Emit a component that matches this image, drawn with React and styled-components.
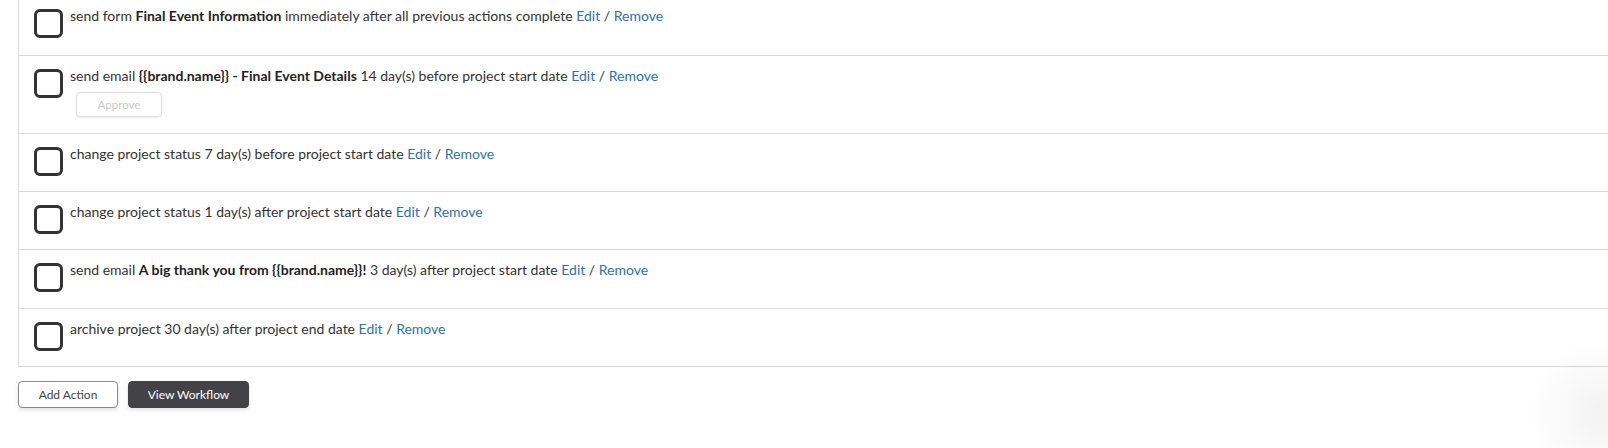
import React from "react";
import styled, { createGlobalStyle } from "styled-components";

const Global = createGlobalStyle`
  html, body { margin: 0; padding: 0; background: #fff; }
  body { font-family: "Lato", "Open Sans", sans-serif; color: #333; overflow: hidden; }
`;

const Page = styled.div`
  padding-left: 18px;
  position: relative;
  height: 448px;
  overflow: hidden;
`;

const List = styled.div`
  margin-top: -4px;
  border-left: 1px solid #dcdcdc;
`;

const Row = styled.div`
  display: flex;
  align-items: flex-start;
  gap: 7px;
  padding: 13px 15px 15px 15px;
  border-bottom: 1px solid #d9d9d9;
  min-height: 29px;
  &:first-child { padding-bottom: 17px; }
  &:nth-child(5) { padding-bottom: 16px; }
`;

const Check = styled.span`
  flex: none;
  width: 29px;
  height: 29px;
  box-sizing: border-box;
  border: 3px solid #333;
  border-radius: 6px;
`;

const Body = styled.div`
  margin-top: -2px;
  display: flex;
  flex-direction: column;
  align-items: flex-start;
`;

const Line = styled.div`
  font-size: 14px;
  line-height: 18px;
  color: #333;
`;

const Strong = styled.b`
  font-weight: 700;
  color: #222;
`;

const Link = styled.a`
  color: #2b72b6;
  text-decoration: none;
  cursor: pointer;
`;

const Approve = styled.button`
  margin: 7px 0 1px 6px;
  width: 86px;
  height: 25px;
  border: 1px solid #dedede;
  border-radius: 4px;
  background: #fff;
  color: #c9c9c9;
  font-family: inherit;
  font-size: 11.5px;
  box-shadow: 0 1px 2px rgba(0, 0, 0, 0.08);
`;

const Buttons = styled.div`
  display: flex;
  gap: 10px;
  margin-top: 14px;
`;

const Btn = styled.button`
  height: 27px;
  width: ${(p) => p.$w}px;
  border-radius: 4px;
  font-family: inherit;
  font-size: 12px;
  border: 1px solid ${(p) => (p.$dark ? "#434247" : "#8a8a8a")};
  background: ${(p) => (p.$dark ? "#434247" : "#fff")};
  color: ${(p) => (p.$dark ? "#fff" : "#444")};
  box-shadow: 0 2px 4px rgba(0, 0, 0, 0.12);
`;

const Glow = styled.div`
  position: absolute;
  right: -70px;
  bottom: -50px;
  width: 150px;
  height: 170px;
  border-radius: 50%;
  background: radial-gradient(circle, rgba(0,0,0,0.05), rgba(0,0,0,0) 65%);
  pointer-events: none;
`;

const Actions = () => (
  <>
    {" "}
    <Link>Edit</Link> / <Link>Remove</Link>
  </>
);

const rows = [
  { text: <>send form <Strong>Final Event Information</Strong> immediately after all previous actions complete</> },
  { text: <>send email <Strong>{"{{brand.name}} - Final Event Details"}</Strong> 14 day(s) before project start date</>, approve: true },
  { text: <>change project status 7 day(s) before project start date</> },
  { text: <>change project status 1 day(s) after project start date</> },
  { text: <>send email <Strong>{"A big thank you from {{brand.name}}!"}</Strong> 3 day(s) after project start date</> },
  { text: <>archive project 30 day(s) after project end date</> },
];

export default function App() {
  return (
    <Page>
      <Global />
      <List>
        {rows.map((r, i) => (
          <Row key={i}>
            <Check />
            <Body>
              <Line>
                {r.text}
                <Actions />
              </Line>
              {r.approve && <Approve>Approve</Approve>}
            </Body>
          </Row>
        ))}
      </List>
      <Buttons>
        <Btn $w={100}>Add Action</Btn>
        <Btn $w={121} $dark>View Workflow</Btn>
      </Buttons>
      <Glow />
    </Page>
  );
}
